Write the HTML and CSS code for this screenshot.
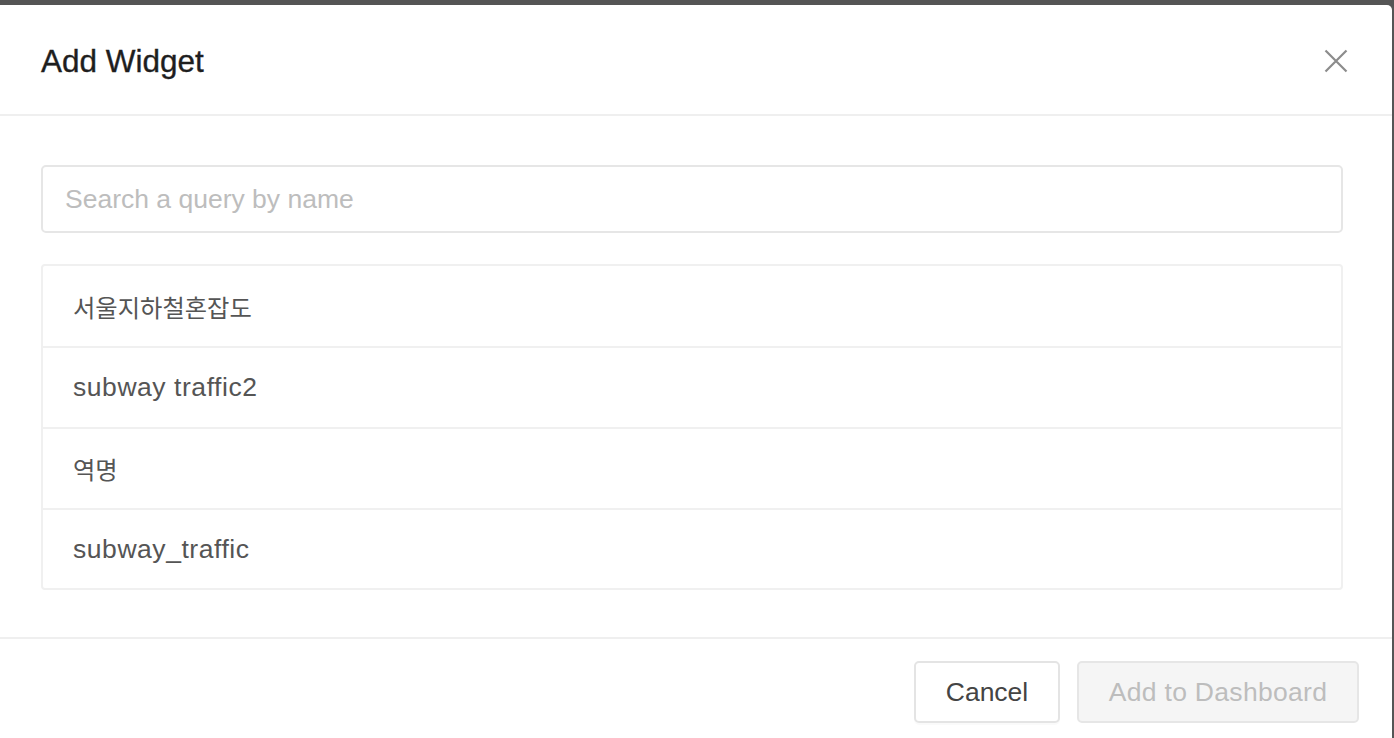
FILE: index.html
```html
<!DOCTYPE html>
<html>
<head>
<meta charset="utf-8">
<link rel="stylesheet" href="styles.css">
</head>
<body>
<div class="modal">
  <div class="modal-header">
    <h1 class="title">Add Widget</h1>
    <button class="close" aria-label="Close">
      <svg width="24" height="24" viewBox="0 0 24 24"><path d="M1.5 1.5 L22.5 22.5 M22.5 1.5 L1.5 22.5" stroke="#8c8c8c" stroke-width="2.2" fill="none"/></svg>
    </button>
  </div>
  <div class="modal-body">
    <input class="search" type="text" placeholder="Search a query by name">
    <ul class="list">
      <li class="item"><span class="ko">서울지하철혼잡도</span></li>
      <li class="item">subway traffic2</li>
      <li class="item"><span class="ko">역명</span></li>
      <li class="item">subway_traffic</li>
    </ul>
  </div>
  <div class="modal-footer">
    <button class="btn btn-default">Cancel</button>
    <button class="btn btn-disabled">Add to Dashboard</button>
  </div>
</div>
</body>
</html>
```

FILE: styles.css
```css
* { box-sizing: border-box; }
html, body { margin: 0; padding: 0; }
body {
  background: #555555;
  font-family: "Liberation Sans", "Noto Sans CJK KR", Arial, sans-serif;
  height: 738px;
  overflow: hidden;
}
.modal {
  margin-top: 5px;
  width: 1392px;
  height: 733px;
  background: #ffffff;
  border-radius: 0 5px 0 0;
  display: flex;
  flex-direction: column;
}
.modal-header {
  height: 111px;
  border-bottom: 2px solid #efefef;
  display: flex;
  align-items: center;
  justify-content: space-between;
  padding: 0 44px 0 41px;
}
.title {
  margin: 0;
  font-size: 31.5px;
  font-weight: normal;
  color: #1e1e1e;
  -webkit-text-stroke: 0.35px #1e1e1e;
  line-height: 1;
  padding-top: 4px;
}
.close {
  border: none;
  background: none;
  padding: 0;
  width: 24px;
  height: 24px;
  margin-top: 3px;
}
.close svg { display: block; }
.modal-body {
  padding: 49px 49px 0 41px;
  height: 523px;
  border-bottom: 2px solid #efefef;
}
.search {
  display: block;
  width: 100%;
  height: 68px;
  border: 2px solid #e6e6e6;
  border-radius: 5px;
  padding: 0 22px;
  font-family: inherit;
  font-size: 26.5px;
  color: #555;
  outline: none;
}
.search::placeholder { color: #bdbdbd; }
.list {
  list-style: none;
  margin: 31px 0 0 0;
  padding: 0;
  border: 2px solid #f0f0f0;
  border-radius: 4px;
}
.item {
  height: 81px;
  display: flex;
  align-items: center;
  padding: 0 30px;
  font-size: 26.5px;
  letter-spacing: 0.55px;
  color: #555555;
  border-top: 2px solid #f0f0f0;
}
.item:first-child { border-top: none; height: 80px; }
.item:last-child { height: 80px; }
.ko {
  font-size: 24.3px;
  letter-spacing: 0;
}
.modal-footer {
  flex: 1;
  display: flex;
  justify-content: flex-end;
  align-items: flex-start;
  gap: 17px;
  padding: 22px 33px 0 0;
}
.btn {
  height: 62px;
  border-radius: 5px;
  font-family: inherit;
  font-size: 26.5px;
  padding: 0 20px;
}
.btn-default {
  width: 146px;
  background: #fff;
  border: 2px solid #e4e4e4;
  color: #444;
  box-shadow: 0 2px 0 rgba(0,0,0,0.02);
}
.btn-disabled {
  width: 282px;
  background: #f5f5f5;
  border: 2px solid #e6e6e6;
  color: #bdbdbd;
  letter-spacing: 0.3px;
}
```
